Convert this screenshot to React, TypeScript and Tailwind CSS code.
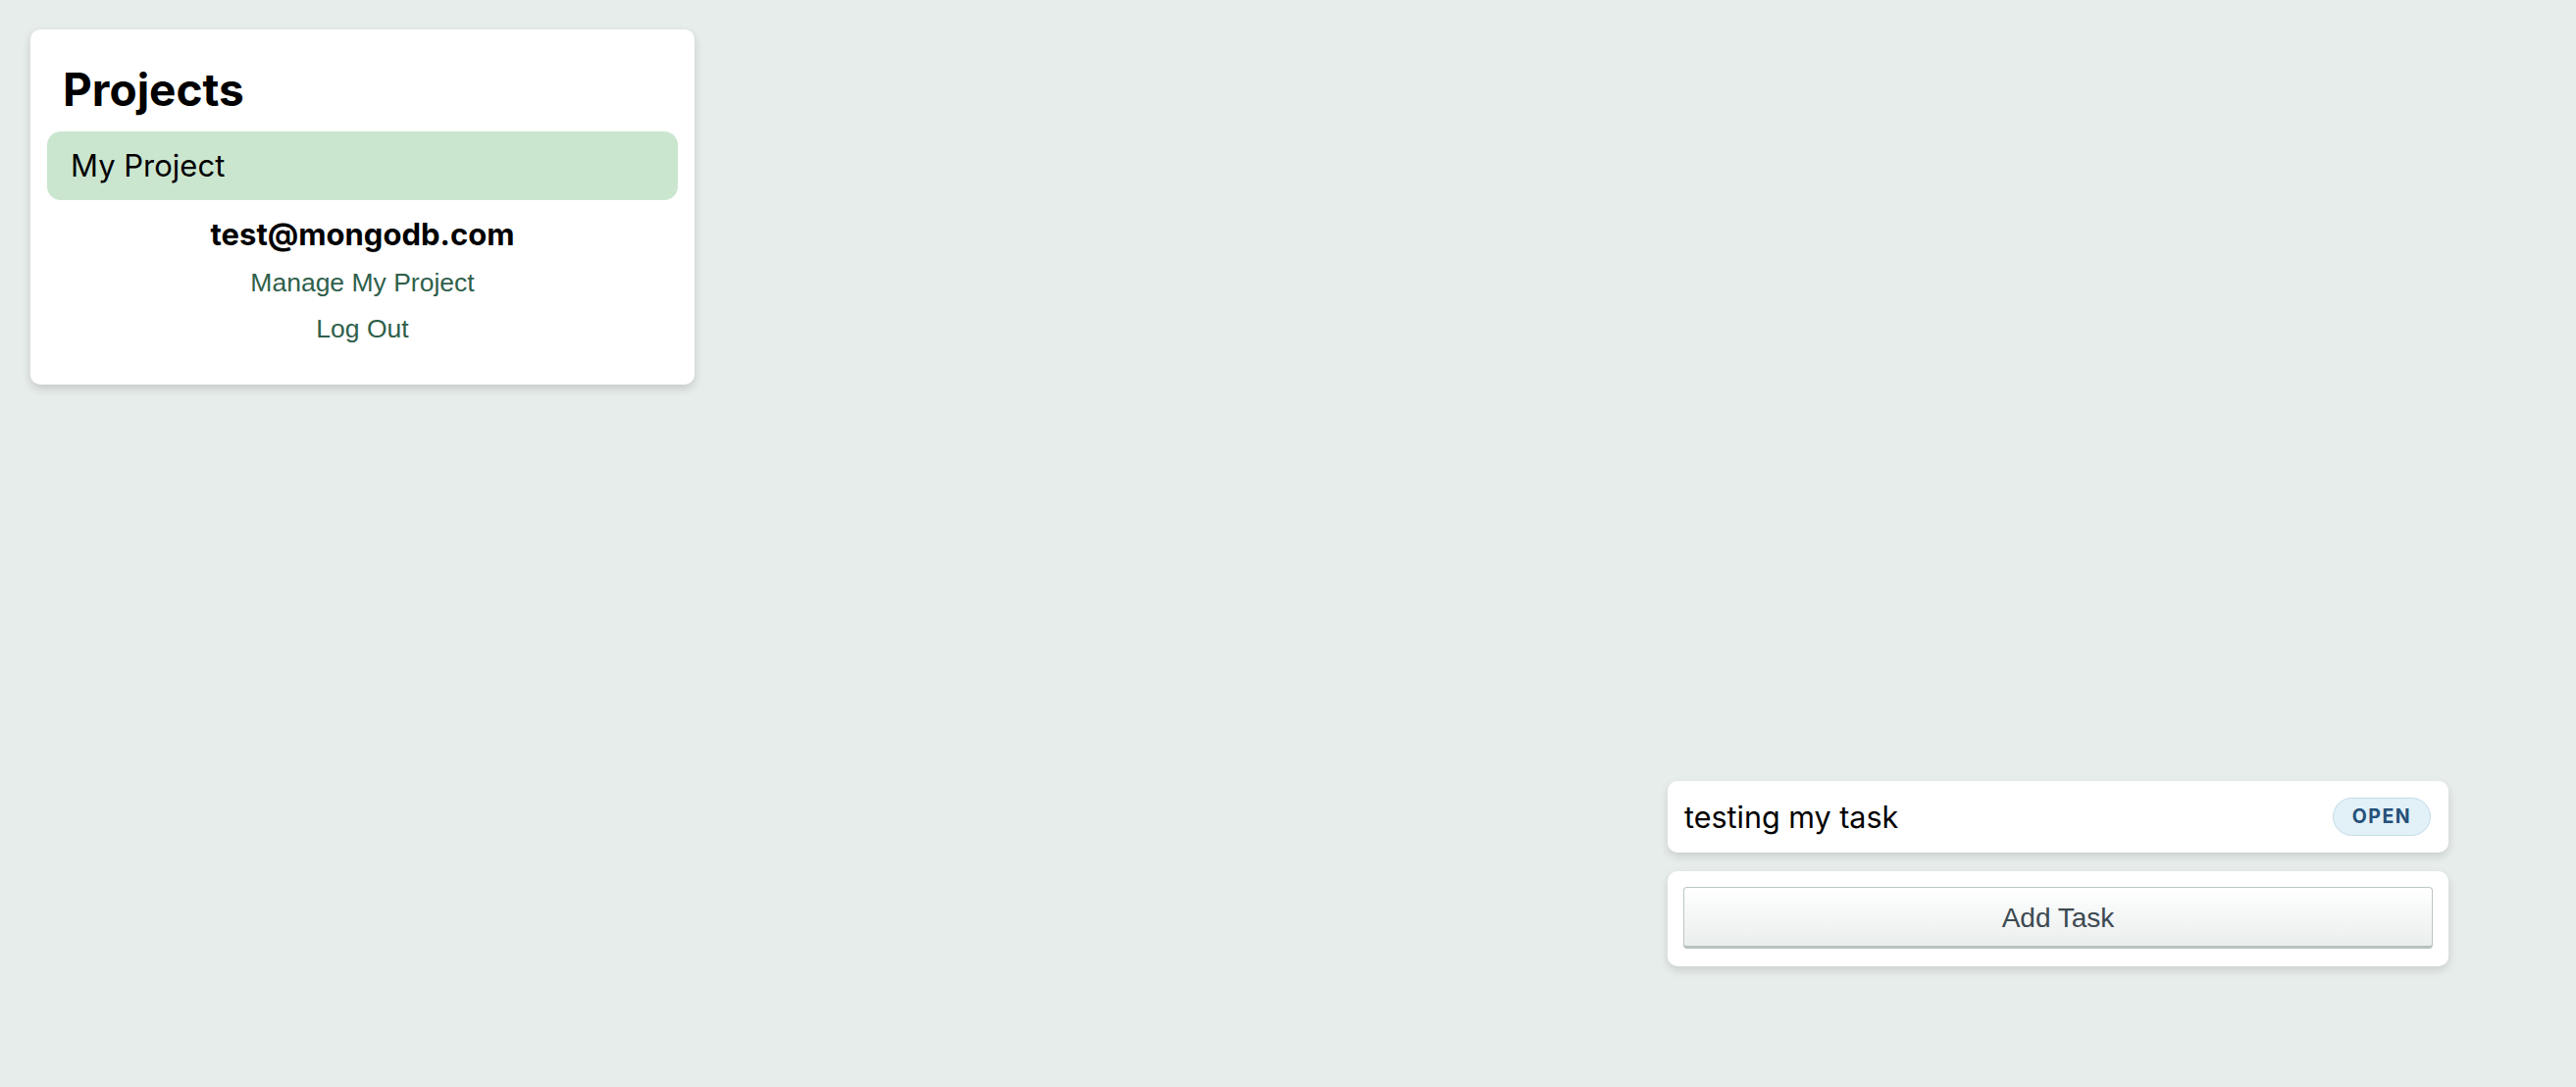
import React from "react";

export default function App() {
  return (
    <div className="w-full h-[1108px] bg-[#e7edeb] flex overflow-hidden" style={{ fontFamily: "Inter, 'Noto Sans', sans-serif" }}>
      <div className="pl-[31px] pt-[30px]">
        <div className="w-[677px] bg-white rounded-[10px] shadow-[0_4px_10px_rgba(0,0,0,0.15)] px-[17px] pt-[33px] pb-[33px] flex flex-col">
          <h1 className="pl-[16px] text-[46px] leading-[56px] font-bold text-black">Projects</h1>
          <div className="mt-[15px] h-[70px] rounded-[14px] bg-[#cbe6cf] flex items-center pl-[24px] text-[31px] text-black">
            My Project
          </div>
          <div className="mt-[15px] text-center text-[31px] leading-[40px] font-bold text-black">test@mongodb.com</div>
          <div className="mt-[6px] flex flex-col items-center text-[26.5px] leading-[47px] text-[#2f5f4b]" style={{ fontFamily: "'Liberation Sans', Arial, sans-serif" }}>
            <span>Manage My Project</span>
            <span>Log Out</span>
          </div>
        </div>
      </div>
      <div className="flex-1 flex justify-end pr-[130px] pt-[796px]">
        <div className="w-[796px] flex flex-col gap-[19px]">
          <div className="h-[73px] bg-white rounded-[10px] shadow-[0_4px_10px_rgba(0,0,0,0.13)] flex items-center justify-between pl-[17px] pr-[18px]">
            <span className="text-[30.5px] text-black">testing my task</span>
            <span className="h-[39px] w-[100px] rounded-full bg-[#e2f0f7] border border-[#c3dcea] flex items-center justify-center text-[19.5px] font-bold tracking-[1.5px] text-[#255079]">
              OPEN
            </span>
          </div>
          <div className="bg-white rounded-[10px] shadow-[0_4px_10px_rgba(0,0,0,0.13)] px-[16px] pt-[16px] pb-[18px]">
            <button className="w-full h-[63px] rounded-[4px] border border-[#bcc6c3] border-b-[3px] border-b-[#b7c2be] bg-gradient-to-b from-white to-[#eaeeed] text-[28px] text-[#3d4a52] flex items-center justify-center pt-[3px]" style={{ fontFamily: "'Liberation Sans', Arial, sans-serif" }}>
              Add Task
            </button>
          </div>
        </div>
      </div>
    </div>
  );
}
